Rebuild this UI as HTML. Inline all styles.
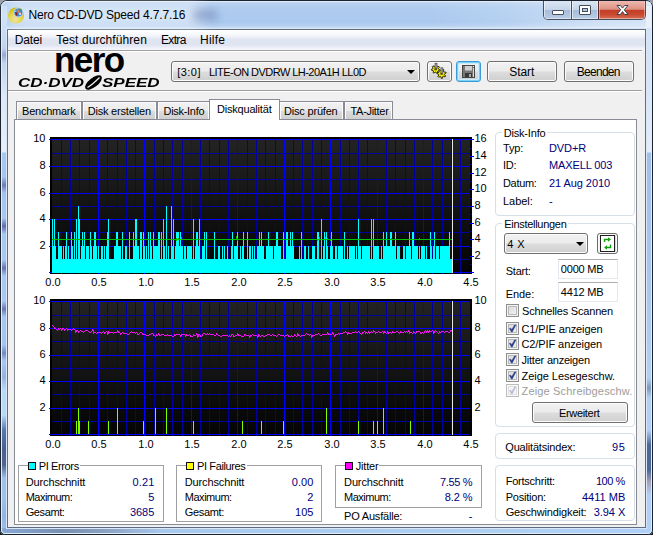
<!DOCTYPE html>
<html lang="de"><head><meta charset="utf-8"><title>Nero CD-DVD Speed 4.7.7.16</title>
<style>
html,body{margin:0;padding:0;}
body{width:653px;height:535px;overflow:hidden;position:relative;background:#9c9ca4;font-family:"Liberation Sans",sans-serif;font-size:11px;color:#000;}
.abs{position:absolute;}
div,span{position:absolute;white-space:nowrap;box-sizing:border-box;}
svg{position:absolute;overflow:visible;}
/* window frame */
#frame{left:0;top:0;width:653px;height:535px;border-radius:7px 7px 5px 5px;background:linear-gradient(#c4d8f2 0,#b0cdf0 7px,#aac9ee 22px,#b6d0f0 26px,#cfe0f5 28px,#a9c8ee 40px);}
#frame-out{left:0;top:0;width:653px;height:535px;border:1px solid #1b2330;border-radius:7px 7px 5px 5px;}
#frame-in{left:1px;top:1px;width:651px;height:533px;border:1px solid #e2edfa;border-radius:6px 6px 4px 4px;}
#client-border{left:7px;top:29px;width:639px;height:499px;border:1px solid #5f6d82;}
#client-glow{left:6px;top:28px;width:641px;height:501px;border:1px solid #d8e6f7;}
#client{left:8px;top:30px;width:637px;height:497px;background:#f0f0f0;}
#title{left:29px;top:7px;font-size:12px;line-height:16px;color:#000;letter-spacing:0.25px;}
#menubar{left:8px;top:30px;width:637px;height:20px;background:linear-gradient(#ffffff 0,#fafbfd 15%,#eef1f8 35%,#e0e5f1 45%,#dfe4f1 75%,#eef1f8 90%,#f4f6fb 100%);}
.menu{top:33px;font-size:12px;line-height:16px;}
.sep{left:8px;width:634px;height:2px;border-top:1px solid #a0a0a0;border-bottom:1px solid #fff;}
/* buttons */
.btn{border:1px solid #707070;border-radius:3px;background:linear-gradient(#f2f2f2 0,#ebebeb 48%,#dddddd 52%,#cfcfcf 100%);box-shadow:inset 0 0 0 1px #fcfcfc;text-align:center;font-size:12px;}
.combo{border:1px solid #707070;border-radius:3px;background:linear-gradient(#f2f2f2 0,#ebebeb 48%,#dddddd 52%,#cfcfcf 100%);box-shadow:inset 0 0 0 1px #fcfcfc;}
.arrow{width:0;height:0;border-left:4px solid transparent;border-right:4px solid transparent;border-top:4px solid #000;}
/* tabs */
.tab{top:101px;height:18px;border:1px solid #898c95;border-bottom:none;background:linear-gradient(#f2f2f2 0,#ebebeb 50%,#dddddd 53%,#cfcfcf 100%);box-shadow:inset 1px 1px 0 #fcfcfc,inset -1px 0 0 #fcfcfc;font-size:11px;line-height:13px;padding-top:3px;text-align:center;}
.tab.act{top:99px;height:21px;background:#fff;z-index:3;box-shadow:none;}
#page{left:14px;top:119px;width:623px;height:406px;border:1px solid #898c95;background:#fff;}
/* axis labels */
.ax{font-size:11px;line-height:14px;color:#000;}
.ax.r{text-align:right;}
.ax.c{text-align:center;}
/* group boxes */
.gb{border:1px solid #d5dfe5;border-radius:4px;}
.gbl{background:#fff;padding:0 2px;font-size:11px;line-height:13px;}
.gb2{border:1px solid #a0a0a0;}
.t{font-size:11px;line-height:13px;}
.v{font-size:11px;line-height:13px;color:#00007a;}
.rv{text-align:right;}
.edit{border:1px solid #e3e9ef;border-top-color:#abadb3;background:#fff;font-size:11px;line-height:13px;}
.cb{width:13px;height:13px;border:1px solid #8e8f8f;background:linear-gradient(135deg,#d6d6d6,#f6f6f6);box-shadow:inset 0 0 0 1px #f4f4f4, inset 0 0 0 2px #b9b9b9;}
.sq{width:8px;height:8px;border:1px solid #101010;}

.x{font-size:11px;line-height:16px;height:16px;z-index:5;}
.x.v{color:#00007a;}
.x.dis{color:#9c9c9c;}
.ck{width:9px;height:9px;}
.cb.dis{border-color:#bcbcbc;background:#f6f6f6;box-shadow:inset 0 0 0 1px #fafafa, inset 0 0 0 2px #e0e0e0;}

.lg{top:75px;font-size:12.5px;line-height:16px;font-weight:bold;font-style:italic;transform-origin:0 0;letter-spacing:0px;}
#glow{left:6px;top:3px;width:200px;height:24px;background:#fff;opacity:.55;filter:blur(7px);border-radius:12px;}
#blob{left:192px;top:9px;width:26px;height:12px;background:#5a6ea8;opacity:.45;filter:blur(4px);border-radius:6px;}

#fl{left:2px;top:6px;width:5px;height:527px;background:linear-gradient(#c8dcf4 24px,#c0d4f0 42px,#98a8d0 49px,#c0d4f0 57px,#dce8f8 90px,#e4ecf8 134px,#e8eef8 146px,#a8c8f0 147px,#a4c4ee 171px,#6c7cb4 179px,#a4c4ee 187px,#a8c8f0 212px,#5c6cac 220px,#a8c8f0 228px,#a8c8f0 254px,#6474b0 262px,#a8c8f0 270px,#a8c8f0 295px,#6878b4 303px,#a8c8f0 311px,#a4c4ee 339px,#7088c0 347px,#a8c8f0 355px,#98b0dc 371px,#b8d8f8 384px,#b8d8f8 409px,#5878b0 424px,#48608c 444px,#506890 459px,#a0c0e8 472px,#a0c0e8 494px,#94b4e0 509px,#9cbce6 521px,#a0c0e8 529px);}
#fr{left:646px;top:6px;width:5px;height:527px;background:linear-gradient(#d4e2f5 54px,#e4ecf8 146px,#a0c0e8 147px,#a8c8ee 294px,#b0d0f4 372px,#8098b8 382px,#b0d0f4 392px,#b0d0f8 424px,#4a6898 439px,#4a6898 464px,#a8a0b8 476px,#b0d0f8 489px,#b0d0f8 529px);}
#fb{left:2px;top:528px;width:649px;height:5px;background:linear-gradient(90deg,#88a8d4 0,#7890b0 60px,#8aa0c0 100px,#a8c8ec 160px,#b0d0f2 500px,#b0d0f8 100%);}
#tr{left:430px;top:2px;width:221px;height:26px;background:linear-gradient(100deg,rgba(255,255,255,0) 0,rgba(255,255,255,.12) 35%,rgba(255,255,255,.42) 75%,rgba(255,255,255,.5) 100%);}

</style></head>
<body>
<div style="left:0;top:527px;width:8px;height:8px;background:#14181e"></div><div style="left:645px;top:527px;width:8px;height:8px;background:#14181e"></div>
<div id="frame"></div>
<div id="fl"></div><div id="fr"></div><div id="fb"></div>
<div id="frame-out"></div>
<div id="frame-in"></div>
<div id="client-glow"></div>
<div id="client-border"></div>
<div id="client"></div>
<!-- title -->
<div id="tr"></div>
<div id="glow"></div>
<div id="blob"></div>
<svg id="appicon" style="left:7px;top:6px" width="18" height="18" viewBox="0 0 18 18"><defs><radialGradient id="ig" cx=".45" cy=".75" r=".7"><stop offset="0" stop-color="#eedfa8"/><stop offset=".5" stop-color="#e6d94e"/><stop offset="1" stop-color="#cdbc14"/></radialGradient></defs><circle cx="9" cy="9.500" r="8" fill="url(#ig)"/><circle cx="11.400" cy="6.600" r="5" fill="#d4d4dc"/><circle cx="11.400" cy="6.600" r="4" fill="#2a8ee0"/><path d="M9.500 3.500 L11 3 L14.500 8 L13 9z" fill="#f07848"/><path d="M11.500 2.800 h2.500 l1 1.500 h-2.500z" fill="#30a040"/><path d="M8 5.500 l1.500 .5 l1 3 l-1.500 .8 z" fill="#a01010"/><circle cx="8.600" cy="5.200" r=".8" fill="#f8e010"/><circle cx="13" cy="8" r=".9" fill="#fff"/></svg>
<!-- caption buttons -->
<div id="capbtns" style="left:543px;top:1px;width:103px;height:19px;border:1px solid #475063;border-top:none;border-radius:0 0 5px 5px;overflow:hidden;">
 <div style="left:0;top:0;width:28px;height:18px;background:linear-gradient(#dbe6f4 0,#c6d6ea 48%,#a7bddb 52%,#bacde6 100%);border-right:1px solid #475063;box-shadow:inset 1px 0 0 rgba(255,255,255,.55),inset -1px -1px 0 rgba(255,255,255,.45);"></div>
 <div style="left:28px;top:0;width:27px;height:18px;background:linear-gradient(#dbe6f4 0,#c6d6ea 48%,#a7bddb 52%,#bacde6 100%);border-right:1px solid #5a2a26;box-shadow:inset 1px 0 0 rgba(255,255,255,.55),inset -1px -1px 0 rgba(255,255,255,.45);"></div>
 <div style="left:55px;top:0;width:46px;height:18px;background:linear-gradient(#efb9ae 0,#dd9183 46%,#c23e28 52%,#c8492f 75%,#d67258 100%);box-shadow:inset 1px 0 0 rgba(255,220,210,.5),inset -1px -1px 0 rgba(255,220,210,.5);"></div>
</div>
<div style="left:552px;top:10px;width:12px;height:5px;background:#fff;border:1px solid #454c5c;border-radius:1px;"></div>
<div style="left:579px;top:5px;width:12px;height:10px;background:#fff;border:1px solid #454c5c;border-radius:1px;"></div>
<div style="left:582px;top:8px;width:6px;height:4px;background:#b4c8e2;border:1px solid #454c5c;"></div>
<svg style="left:616px;top:4px" width="13" height="12" viewBox="0 0 13 12"><path d="M1 1.500h3.400l2.100 2.600 2.100-2.600h3.400l-3.700 4.300 3.700 4.700h-3.400l-2.100-2.900-2.100 2.900h-3.400l3.700-4.700z" fill="#fff" stroke="#3c4150" stroke-width="1" stroke-linejoin="round"/></svg>
<!-- menu -->
<div id="menubar"></div>
<!-- logo -->
<div id="nero" style="left:54px;top:40px;font-size:35px;line-height:40px;font-weight:bold;letter-spacing:-1.6px;">nero</div>
<div id="cd1" class="lg" style="left:18px;transform:scaleX(1.36);">CD·DVD</div>
<div id="cd2" class="lg" style="left:102px;transform:scaleX(1.36);">SPEED</div>
<svg style="left:84px;top:75px" width="19" height="15" viewBox="0 0 19 15"><ellipse cx="9.500" cy="7.500" rx="10" ry="4.600" transform="rotate(-38 9.500 7.500)" fill="#000"/><path d="M3.500 12.500 C7 10.500 11 7 15.500 2.500" stroke="#f0f0f0" stroke-width="1.200" fill="none"/></svg>
<!-- toolbar -->
<div class="combo" style="left:171px;top:61px;width:249px;height:21px;"></div>
<div class="arrow" style="left:407px;top:70px;"></div>
<div class="btn" style="left:427px;top:61px;width:25px;height:21px;"></div>
<div class="btn" style="left:456px;top:61px;width:25px;height:21px;border-color:#3c9ad8;box-shadow:inset 0 0 0 1px #7ad0f4, inset 0 0 0 2px #c8ecfb;"></div>
<svg id="gears" style="left:430px;top:62px" width="19" height="18" viewBox="0 0 19 18"><polygon points="9.91,8.05 9.62,8.97 8.01,8.95 7.56,9.42 7.66,11.03 6.76,11.37 5.77,10.10 5.12,10.04 3.93,11.12 3.10,10.63 3.48,9.06 3.12,8.52 1.53,8.26 1.40,7.30 2.86,6.62 3.06,6.01 2.27,4.60 2.94,3.90 4.38,4.62 4.99,4.39 5.60,2.90 6.55,2.99 6.89,4.56 7.45,4.89 9.00,4.44 9.53,5.24 8.51,6.49 8.60,7.13" fill="#f4ec00" stroke="#1a1a00" stroke-width="0.9" stroke-linejoin="round"/><polygon points="15.64,14.01 15.04,14.85 13.35,14.24 12.76,14.57 12.39,16.33 11.36,16.39 10.78,14.69 10.16,14.43 8.55,15.24 7.86,14.48 8.83,12.96 8.64,12.32 7.01,11.56 7.17,10.55 8.97,10.36 9.35,9.81 8.92,8.06 9.82,7.56 11.08,8.84 11.75,8.80 12.85,7.37 13.81,7.76 13.59,9.55 14.04,10.05 15.84,10.02 16.13,11.01 14.60,11.95 14.49,12.62" fill="#f4ec00" stroke="#1a1a00" stroke-width="0.9" stroke-linejoin="round"/><circle cx="5.699999999999989" cy="7.200000000000003" r="1.300" fill="#605800"/><circle cx="11.600000000000023" cy="11.799999999999997" r="1.300" fill="#605800"/><rect x="5.0" y="1.2000000000000028" width="2" height="5.600" fill="#a8a8b0" stroke="#38383c" stroke-width=".6"/><rect x="10.899999999999977" y="5.799999999999997" width="2" height="5.600" fill="#a8a8b0" stroke="#38383c" stroke-width=".6"/></svg>
<svg id="floppy" style="left:462px;top:65px" width="14" height="13" viewBox="0 0 14 13" shape-rendering="crispEdges"><rect x="0" y="0" width="13" height="13" fill="#454545"/><rect x="1" y="1" width="11" height="11" fill="#787878"/><rect x="3" y="1" width="7" height="5" fill="#cfcfcf"/><rect x="3" y="5" width="7" height="1" fill="#a8a8a8"/><rect x="3" y="8" width="7" height="4" fill="#3a3a3a"/><rect x="7" y="9" width="2" height="3" fill="#a8a8a8"/><rect x="11" y="3" width="1" height="9" fill="#d8d8d8"/><rect x="11" y="1" width="1" height="1" fill="#e8e8e8"/></svg>
<div class="btn" style="left:487px;top:61px;width:70px;height:21px;"></div>
<div class="btn" style="left:564px;top:61px;width:70px;height:21px;"></div>
<div class="sep" style="top:50px"></div>
<div class="sep" style="top:90px"></div>
<!-- tabs -->
<div id="page"></div>
<div class="tab" style="left:16px;width:66px;"></div>
<div class="tab" style="left:82px;width:75px;"></div>
<div class="tab" style="left:157px;width:53px;"></div>
<div class="tab act" style="left:209px;width:71px;"></div>
<div class="tab" style="left:279px;width:65px;"></div>
<div class="tab" style="left:344px;width:49px;"></div>
<!-- charts -->
<svg class="abs" style="left:46px;top:136px" width="444" height="139" viewBox="46 136 444 139" shape-rendering="crispEdges">
<defs><linearGradient id="g1" x1="0" y1="0" x2="0" y2="1"><stop offset="0" stop-color="#232323"/><stop offset="1" stop-color="#040404"/></linearGradient></defs>
<rect x="50" y="137" width="422" height="137" fill="#000"/>
<rect x="52" y="139" width="418" height="134" fill="url(#g1)"/>
<rect x="61" y="139" width="1" height="135" fill="#00009c"/>
<rect x="70" y="139" width="1" height="135" fill="#00009c"/>
<rect x="79" y="139" width="1" height="135" fill="#00009c"/>
<rect x="89" y="139" width="1" height="135" fill="#00009c"/>
<rect x="98" y="139" width="1" height="135" fill="#0000ff"/>
<rect x="107" y="139" width="1" height="135" fill="#00009c"/>
<rect x="117" y="139" width="1" height="135" fill="#00009c"/>
<rect x="126" y="139" width="1" height="135" fill="#00009c"/>
<rect x="135" y="139" width="1" height="135" fill="#00009c"/>
<rect x="144" y="139" width="1" height="135" fill="#0000ff"/>
<rect x="154" y="139" width="1" height="135" fill="#00009c"/>
<rect x="163" y="139" width="1" height="135" fill="#00009c"/>
<rect x="172" y="139" width="1" height="135" fill="#00009c"/>
<rect x="182" y="139" width="1" height="135" fill="#00009c"/>
<rect x="191" y="139" width="1" height="135" fill="#0000ff"/>
<rect x="200" y="139" width="1" height="135" fill="#00009c"/>
<rect x="209" y="139" width="1" height="135" fill="#00009c"/>
<rect x="219" y="139" width="1" height="135" fill="#00009c"/>
<rect x="228" y="139" width="1" height="135" fill="#00009c"/>
<rect x="237" y="139" width="1" height="135" fill="#0000ff"/>
<rect x="247" y="139" width="1" height="135" fill="#00009c"/>
<rect x="256" y="139" width="1" height="135" fill="#00009c"/>
<rect x="265" y="139" width="1" height="135" fill="#00009c"/>
<rect x="275" y="139" width="1" height="135" fill="#00009c"/>
<rect x="284" y="139" width="1" height="135" fill="#0000ff"/>
<rect x="293" y="139" width="1" height="135" fill="#00009c"/>
<rect x="302" y="139" width="1" height="135" fill="#00009c"/>
<rect x="312" y="139" width="1" height="135" fill="#00009c"/>
<rect x="321" y="139" width="1" height="135" fill="#00009c"/>
<rect x="330" y="139" width="1" height="135" fill="#0000ff"/>
<rect x="340" y="139" width="1" height="135" fill="#00009c"/>
<rect x="349" y="139" width="1" height="135" fill="#00009c"/>
<rect x="358" y="139" width="1" height="135" fill="#00009c"/>
<rect x="367" y="139" width="1" height="135" fill="#00009c"/>
<rect x="377" y="139" width="1" height="135" fill="#0000ff"/>
<rect x="386" y="139" width="1" height="135" fill="#00009c"/>
<rect x="395" y="139" width="1" height="135" fill="#00009c"/>
<rect x="405" y="139" width="1" height="135" fill="#00009c"/>
<rect x="414" y="139" width="1" height="135" fill="#00009c"/>
<rect x="423" y="139" width="1" height="135" fill="#0000ff"/>
<rect x="432" y="139" width="1" height="135" fill="#00009c"/>
<rect x="442" y="139" width="1" height="135" fill="#00009c"/>
<rect x="451" y="139" width="1" height="135" fill="#00009c"/>
<rect x="460" y="139" width="1" height="135" fill="#00009c"/>
<rect x="49" y="272" width="421" height="1" fill="#0000ff"/>
<rect x="52" y="259" width="418" height="1" fill="#00009c"/>
<rect x="49" y="246" width="421" height="1" fill="#0000ff"/>
<rect x="52" y="232" width="418" height="1" fill="#00009c"/>
<rect x="49" y="219" width="421" height="1" fill="#0000ff"/>
<rect x="52" y="206" width="418" height="1" fill="#00009c"/>
<rect x="49" y="193" width="421" height="1" fill="#0000ff"/>
<rect x="52" y="179" width="418" height="1" fill="#00009c"/>
<rect x="49" y="166" width="421" height="1" fill="#0000ff"/>
<rect x="52" y="153" width="418" height="1" fill="#00009c"/>
<rect x="49" y="139" width="421" height="1" fill="#0000ff"/>
<rect x="470" y="272" width="4" height="1" fill="#0000ff"/>
<rect x="470" y="264" width="2" height="1" fill="#0000a8"/>
<rect x="470" y="256" width="4" height="1" fill="#0000ff"/>
<rect x="470" y="247" width="2" height="1" fill="#0000a8"/>
<rect x="470" y="239" width="4" height="1" fill="#0000ff"/>
<rect x="470" y="231" width="2" height="1" fill="#0000a8"/>
<rect x="470" y="223" width="4" height="1" fill="#0000ff"/>
<rect x="470" y="214" width="2" height="1" fill="#0000a8"/>
<rect x="470" y="206" width="4" height="1" fill="#0000ff"/>
<rect x="470" y="198" width="2" height="1" fill="#0000a8"/>
<rect x="470" y="189" width="4" height="1" fill="#0000ff"/>
<rect x="470" y="181" width="2" height="1" fill="#0000a8"/>
<rect x="470" y="173" width="4" height="1" fill="#0000ff"/>
<rect x="470" y="164" width="2" height="1" fill="#0000a8"/>
<rect x="470" y="156" width="4" height="1" fill="#0000ff"/>
<rect x="470" y="148" width="2" height="1" fill="#0000a8"/>
<rect x="470" y="139" width="4" height="1" fill="#0000ff"/>
<rect x="52" y="259" width="400" height="14" fill="#00ffff"/>
<rect x="52" y="246" width="4" height="13" fill="#00ffff"/>
<rect x="58" y="246" width="4" height="13" fill="#00ffff"/>
<rect x="63" y="246" width="1" height="13" fill="#00ffff"/>
<rect x="65" y="246" width="2" height="13" fill="#00ffff"/>
<rect x="68" y="246" width="1" height="13" fill="#00ffff"/>
<rect x="71" y="246" width="2" height="13" fill="#00ffff"/>
<rect x="74" y="246" width="1" height="13" fill="#00ffff"/>
<rect x="76" y="246" width="1" height="13" fill="#00ffff"/>
<rect x="78" y="246" width="2" height="13" fill="#00ffff"/>
<rect x="81" y="246" width="4" height="13" fill="#00ffff"/>
<rect x="86" y="246" width="3" height="13" fill="#00ffff"/>
<rect x="90" y="246" width="2" height="13" fill="#00ffff"/>
<rect x="93" y="246" width="4" height="13" fill="#00ffff"/>
<rect x="98" y="246" width="1" height="13" fill="#00ffff"/>
<rect x="101" y="246" width="2" height="13" fill="#00ffff"/>
<rect x="104" y="246" width="1" height="13" fill="#00ffff"/>
<rect x="106" y="246" width="3" height="13" fill="#00ffff"/>
<rect x="114" y="246" width="7" height="13" fill="#00ffff"/>
<rect x="122" y="246" width="1" height="13" fill="#00ffff"/>
<rect x="125" y="246" width="2" height="13" fill="#00ffff"/>
<rect x="129" y="246" width="1" height="13" fill="#00ffff"/>
<rect x="133" y="246" width="6" height="13" fill="#00ffff"/>
<rect x="140" y="246" width="2" height="13" fill="#00ffff"/>
<rect x="143" y="246" width="2" height="13" fill="#00ffff"/>
<rect x="146" y="246" width="1" height="13" fill="#00ffff"/>
<rect x="148" y="246" width="1" height="13" fill="#00ffff"/>
<rect x="150" y="246" width="2" height="13" fill="#00ffff"/>
<rect x="153" y="246" width="7" height="13" fill="#00ffff"/>
<rect x="161" y="246" width="1" height="13" fill="#00ffff"/>
<rect x="163" y="246" width="2" height="13" fill="#00ffff"/>
<rect x="166" y="246" width="1" height="13" fill="#00ffff"/>
<rect x="168" y="246" width="1" height="13" fill="#00ffff"/>
<rect x="171" y="246" width="3" height="13" fill="#00ffff"/>
<rect x="175" y="246" width="8" height="13" fill="#00ffff"/>
<rect x="184" y="246" width="2" height="13" fill="#00ffff"/>
<rect x="187" y="246" width="5" height="13" fill="#00ffff"/>
<rect x="193" y="246" width="1" height="13" fill="#00ffff"/>
<rect x="195" y="246" width="5" height="13" fill="#00ffff"/>
<rect x="202" y="246" width="3" height="13" fill="#00ffff"/>
<rect x="206" y="246" width="1" height="13" fill="#00ffff"/>
<rect x="214" y="246" width="1" height="13" fill="#00ffff"/>
<rect x="218" y="246" width="2" height="13" fill="#00ffff"/>
<rect x="222" y="246" width="1" height="13" fill="#00ffff"/>
<rect x="224" y="246" width="1" height="13" fill="#00ffff"/>
<rect x="227" y="246" width="1" height="13" fill="#00ffff"/>
<rect x="231" y="246" width="2" height="13" fill="#00ffff"/>
<rect x="234" y="246" width="4" height="13" fill="#00ffff"/>
<rect x="240" y="246" width="1" height="13" fill="#00ffff"/>
<rect x="242" y="246" width="2" height="13" fill="#00ffff"/>
<rect x="247" y="246" width="1" height="13" fill="#00ffff"/>
<rect x="249" y="246" width="2" height="13" fill="#00ffff"/>
<rect x="252" y="246" width="1" height="13" fill="#00ffff"/>
<rect x="254" y="246" width="1" height="13" fill="#00ffff"/>
<rect x="257" y="246" width="7" height="13" fill="#00ffff"/>
<rect x="266" y="246" width="7" height="13" fill="#00ffff"/>
<rect x="274" y="246" width="7" height="13" fill="#00ffff"/>
<rect x="283" y="246" width="1" height="13" fill="#00ffff"/>
<rect x="286" y="246" width="8" height="13" fill="#00ffff"/>
<rect x="299" y="246" width="1" height="13" fill="#00ffff"/>
<rect x="301" y="246" width="1" height="13" fill="#00ffff"/>
<rect x="304" y="246" width="2" height="13" fill="#00ffff"/>
<rect x="308" y="246" width="1" height="13" fill="#00ffff"/>
<rect x="312" y="246" width="3" height="13" fill="#00ffff"/>
<rect x="317" y="246" width="2" height="13" fill="#00ffff"/>
<rect x="321" y="246" width="1" height="13" fill="#00ffff"/>
<rect x="323" y="246" width="2" height="13" fill="#00ffff"/>
<rect x="326" y="246" width="2" height="13" fill="#00ffff"/>
<rect x="330" y="246" width="3" height="13" fill="#00ffff"/>
<rect x="335" y="246" width="2" height="13" fill="#00ffff"/>
<rect x="338" y="246" width="5" height="13" fill="#00ffff"/>
<rect x="344" y="246" width="1" height="13" fill="#00ffff"/>
<rect x="347" y="246" width="1" height="13" fill="#00ffff"/>
<rect x="349" y="246" width="6" height="13" fill="#00ffff"/>
<rect x="356" y="246" width="1" height="13" fill="#00ffff"/>
<rect x="358" y="246" width="3" height="13" fill="#00ffff"/>
<rect x="362" y="246" width="8" height="13" fill="#00ffff"/>
<rect x="371" y="246" width="1" height="13" fill="#00ffff"/>
<rect x="373" y="246" width="6" height="13" fill="#00ffff"/>
<rect x="381" y="246" width="1" height="13" fill="#00ffff"/>
<rect x="383" y="246" width="13" height="13" fill="#00ffff"/>
<rect x="397" y="246" width="3" height="13" fill="#00ffff"/>
<rect x="403" y="246" width="2" height="13" fill="#00ffff"/>
<rect x="406" y="246" width="5" height="13" fill="#00ffff"/>
<rect x="412" y="246" width="6" height="13" fill="#00ffff"/>
<rect x="419" y="246" width="1" height="13" fill="#00ffff"/>
<rect x="421" y="246" width="4" height="13" fill="#00ffff"/>
<rect x="426" y="246" width="1" height="13" fill="#00ffff"/>
<rect x="430" y="246" width="2" height="13" fill="#00ffff"/>
<rect x="433" y="246" width="2" height="13" fill="#00ffff"/>
<rect x="436" y="246" width="3" height="13" fill="#00ffff"/>
<rect x="440" y="246" width="10" height="13" fill="#00ffff"/>
<rect x="52" y="232" width="1" height="14" fill="#00ffff"/>
<rect x="54" y="232" width="1" height="14" fill="#00ffff"/>
<rect x="58" y="232" width="1" height="14" fill="#00ffff"/>
<rect x="66" y="232" width="1" height="14" fill="#00ffff"/>
<rect x="71" y="232" width="1" height="14" fill="#00ffff"/>
<rect x="74" y="232" width="1" height="14" fill="#00ffff"/>
<rect x="76" y="232" width="1" height="14" fill="#00ffff"/>
<rect x="78" y="232" width="2" height="14" fill="#00ffff"/>
<rect x="82" y="232" width="1" height="14" fill="#00ffff"/>
<rect x="84" y="232" width="1" height="14" fill="#00ffff"/>
<rect x="90" y="232" width="1" height="14" fill="#00ffff"/>
<rect x="94" y="232" width="2" height="14" fill="#00ffff"/>
<rect x="107" y="232" width="2" height="14" fill="#00ffff"/>
<rect x="116" y="232" width="2" height="14" fill="#00ffff"/>
<rect x="122" y="232" width="1" height="14" fill="#00ffff"/>
<rect x="129" y="232" width="1" height="14" fill="#00ffff"/>
<rect x="133" y="232" width="1" height="14" fill="#00ffff"/>
<rect x="135" y="232" width="2" height="14" fill="#00ffff"/>
<rect x="140" y="232" width="2" height="14" fill="#00ffff"/>
<rect x="143" y="232" width="1" height="14" fill="#00ffff"/>
<rect x="148" y="232" width="1" height="14" fill="#00ffff"/>
<rect x="150" y="232" width="1" height="14" fill="#00ffff"/>
<rect x="153" y="232" width="1" height="14" fill="#00ffff"/>
<rect x="158" y="232" width="2" height="14" fill="#00ffff"/>
<rect x="161" y="232" width="1" height="14" fill="#00ffff"/>
<rect x="163" y="232" width="1" height="14" fill="#00ffff"/>
<rect x="166" y="232" width="1" height="14" fill="#00ffff"/>
<rect x="171" y="232" width="1" height="14" fill="#00ffff"/>
<rect x="173" y="232" width="1" height="14" fill="#00ffff"/>
<rect x="176" y="232" width="3" height="14" fill="#00ffff"/>
<rect x="180" y="232" width="1" height="14" fill="#00ffff"/>
<rect x="193" y="232" width="1" height="14" fill="#00ffff"/>
<rect x="196" y="232" width="2" height="14" fill="#00ffff"/>
<rect x="199" y="232" width="1" height="14" fill="#00ffff"/>
<rect x="204" y="232" width="1" height="14" fill="#00ffff"/>
<rect x="206" y="232" width="1" height="14" fill="#00ffff"/>
<rect x="214" y="232" width="1" height="14" fill="#00ffff"/>
<rect x="232" y="232" width="1" height="14" fill="#00ffff"/>
<rect x="237" y="232" width="1" height="14" fill="#00ffff"/>
<rect x="243" y="232" width="1" height="14" fill="#00ffff"/>
<rect x="247" y="232" width="1" height="14" fill="#00ffff"/>
<rect x="259" y="232" width="1" height="14" fill="#00ffff"/>
<rect x="261" y="232" width="1" height="14" fill="#00ffff"/>
<rect x="268" y="232" width="1" height="14" fill="#00ffff"/>
<rect x="276" y="232" width="2" height="14" fill="#00ffff"/>
<rect x="283" y="232" width="1" height="14" fill="#00ffff"/>
<rect x="286" y="232" width="2" height="14" fill="#00ffff"/>
<rect x="290" y="232" width="1" height="14" fill="#00ffff"/>
<rect x="292" y="232" width="1" height="14" fill="#00ffff"/>
<rect x="301" y="232" width="1" height="14" fill="#00ffff"/>
<rect x="317" y="232" width="2" height="14" fill="#00ffff"/>
<rect x="321" y="232" width="1" height="14" fill="#00ffff"/>
<rect x="324" y="232" width="1" height="14" fill="#00ffff"/>
<rect x="326" y="232" width="1" height="14" fill="#00ffff"/>
<rect x="331" y="232" width="1" height="14" fill="#00ffff"/>
<rect x="344" y="232" width="1" height="14" fill="#00ffff"/>
<rect x="358" y="232" width="1" height="14" fill="#00ffff"/>
<rect x="371" y="232" width="1" height="14" fill="#00ffff"/>
<rect x="373" y="232" width="1" height="14" fill="#00ffff"/>
<rect x="383" y="232" width="1" height="14" fill="#00ffff"/>
<rect x="386" y="232" width="1" height="14" fill="#00ffff"/>
<rect x="390" y="232" width="2" height="14" fill="#00ffff"/>
<rect x="395" y="232" width="1" height="14" fill="#00ffff"/>
<rect x="409" y="232" width="1" height="14" fill="#00ffff"/>
<rect x="412" y="232" width="2" height="14" fill="#00ffff"/>
<rect x="430" y="232" width="1" height="14" fill="#00ffff"/>
<rect x="434" y="232" width="1" height="14" fill="#00ffff"/>
<rect x="449" y="232" width="1" height="14" fill="#00ffff"/>
<rect x="52" y="219" width="1" height="13" fill="#00ffff"/>
<rect x="54" y="219" width="1" height="13" fill="#00ffff"/>
<rect x="76" y="219" width="1" height="13" fill="#00ffff"/>
<rect x="78" y="219" width="2" height="13" fill="#00ffff"/>
<rect x="108" y="219" width="1" height="13" fill="#00ffff"/>
<rect x="135" y="219" width="2" height="13" fill="#00ffff"/>
<rect x="163" y="219" width="1" height="13" fill="#00ffff"/>
<rect x="166" y="219" width="1" height="13" fill="#00ffff"/>
<rect x="171" y="219" width="1" height="13" fill="#00ffff"/>
<rect x="173" y="219" width="1" height="13" fill="#00ffff"/>
<rect x="193" y="219" width="1" height="13" fill="#00ffff"/>
<rect x="199" y="219" width="1" height="13" fill="#00ffff"/>
<rect x="321" y="219" width="1" height="13" fill="#00ffff"/>
<rect x="358" y="219" width="1" height="13" fill="#00ffff"/>
<rect x="371" y="219" width="1" height="13" fill="#00ffff"/>
<rect x="373" y="219" width="1" height="13" fill="#00ffff"/>
<rect x="78" y="206" width="1" height="13" fill="#00ffff"/>
<rect x="166" y="206" width="1" height="13" fill="#00ffff"/>
<rect x="171" y="206" width="1" height="13" fill="#00ffff"/>
<rect x="52" y="239" width="400" height="1" fill="#00c000"/>
<rect x="176" y="238" width="1" height="3" fill="#00c000"/>
<rect x="178" y="238" width="1" height="2" fill="#00c000"/>
<rect x="181" y="237" width="1" height="3" fill="#00c000"/>
<rect x="236" y="236" width="1" height="4" fill="#00c000"/>
<rect x="237" y="238" width="1" height="3" fill="#00c000"/>
<rect x="317" y="239" width="1" height="2" fill="#00c000"/>
<rect x="319" y="237" width="1" height="3" fill="#00c000"/>
<rect x="325" y="237" width="1" height="3" fill="#00c000"/>
<rect x="327" y="238" width="1" height="2" fill="#00c000"/>
<rect x="330" y="239" width="1" height="2" fill="#00c000"/>
<rect x="391" y="238" width="1" height="2" fill="#00c000"/>
<rect x="419" y="238" width="1" height="2" fill="#00c000"/>
<rect x="452" y="139" width="1" height="134" fill="#e8e8e8"/>
</svg><div class="ax r" style="left:20px;width:25.500px;top:238px">2</div>
<div class="ax r" style="left:20px;width:25.500px;top:211px">4</div>
<div class="ax r" style="left:20px;width:25.500px;top:185px">6</div>
<div class="ax r" style="left:20px;width:25.500px;top:158px">8</div>
<div class="ax r" style="left:20px;width:25.500px;top:131px">10</div>
<div class="ax" style="left:474.500px;top:248px">2</div>
<div class="ax" style="left:474.500px;top:231px">4</div>
<div class="ax" style="left:474.500px;top:215px">6</div>
<div class="ax" style="left:474.500px;top:198px">8</div>
<div class="ax" style="left:474.500px;top:181px">10</div>
<div class="ax" style="left:474.500px;top:165px">12</div>
<div class="ax" style="left:474.500px;top:148px">14</div>
<div class="ax" style="left:474.500px;top:131px">16</div>
<div class="ax c" style="left:39px;width:28px;top:275px">0.0</div>
<div class="ax c" style="left:85px;width:28px;top:275px">0.5</div>
<div class="ax c" style="left:132px;width:28px;top:275px">1.0</div>
<div class="ax c" style="left:178px;width:28px;top:275px">1.5</div>
<div class="ax c" style="left:225px;width:28px;top:275px">2.0</div>
<div class="ax c" style="left:271px;width:28px;top:275px">2.5</div>
<div class="ax c" style="left:318px;width:28px;top:275px">3.0</div>
<div class="ax c" style="left:364px;width:28px;top:275px">3.5</div>
<div class="ax c" style="left:411px;width:28px;top:275px">4.0</div>
<div class="ax c" style="left:457px;width:28px;top:275px">4.5</div>
<svg class="abs" style="left:46px;top:298px" width="444" height="139" viewBox="46 298 444 139" shape-rendering="crispEdges">
<defs><linearGradient id="g2" x1="0" y1="0" x2="0" y2="1"><stop offset="0" stop-color="#232323"/><stop offset="1" stop-color="#040404"/></linearGradient></defs>
<rect x="50" y="299" width="422" height="137" fill="#000"/>
<rect x="52" y="301" width="418" height="134" fill="url(#g2)"/>
<rect x="61" y="301" width="1" height="135" fill="#00009c"/>
<rect x="70" y="301" width="1" height="135" fill="#00009c"/>
<rect x="79" y="301" width="1" height="135" fill="#00009c"/>
<rect x="89" y="301" width="1" height="135" fill="#00009c"/>
<rect x="98" y="301" width="1" height="135" fill="#0000ff"/>
<rect x="107" y="301" width="1" height="135" fill="#00009c"/>
<rect x="117" y="301" width="1" height="135" fill="#00009c"/>
<rect x="126" y="301" width="1" height="135" fill="#00009c"/>
<rect x="135" y="301" width="1" height="135" fill="#00009c"/>
<rect x="144" y="301" width="1" height="135" fill="#0000ff"/>
<rect x="154" y="301" width="1" height="135" fill="#00009c"/>
<rect x="163" y="301" width="1" height="135" fill="#00009c"/>
<rect x="172" y="301" width="1" height="135" fill="#00009c"/>
<rect x="182" y="301" width="1" height="135" fill="#00009c"/>
<rect x="191" y="301" width="1" height="135" fill="#0000ff"/>
<rect x="200" y="301" width="1" height="135" fill="#00009c"/>
<rect x="209" y="301" width="1" height="135" fill="#00009c"/>
<rect x="219" y="301" width="1" height="135" fill="#00009c"/>
<rect x="228" y="301" width="1" height="135" fill="#00009c"/>
<rect x="237" y="301" width="1" height="135" fill="#0000ff"/>
<rect x="247" y="301" width="1" height="135" fill="#00009c"/>
<rect x="256" y="301" width="1" height="135" fill="#00009c"/>
<rect x="265" y="301" width="1" height="135" fill="#00009c"/>
<rect x="275" y="301" width="1" height="135" fill="#00009c"/>
<rect x="284" y="301" width="1" height="135" fill="#0000ff"/>
<rect x="293" y="301" width="1" height="135" fill="#00009c"/>
<rect x="302" y="301" width="1" height="135" fill="#00009c"/>
<rect x="312" y="301" width="1" height="135" fill="#00009c"/>
<rect x="321" y="301" width="1" height="135" fill="#00009c"/>
<rect x="330" y="301" width="1" height="135" fill="#0000ff"/>
<rect x="340" y="301" width="1" height="135" fill="#00009c"/>
<rect x="349" y="301" width="1" height="135" fill="#00009c"/>
<rect x="358" y="301" width="1" height="135" fill="#00009c"/>
<rect x="367" y="301" width="1" height="135" fill="#00009c"/>
<rect x="377" y="301" width="1" height="135" fill="#0000ff"/>
<rect x="386" y="301" width="1" height="135" fill="#00009c"/>
<rect x="395" y="301" width="1" height="135" fill="#00009c"/>
<rect x="405" y="301" width="1" height="135" fill="#00009c"/>
<rect x="414" y="301" width="1" height="135" fill="#00009c"/>
<rect x="423" y="301" width="1" height="135" fill="#0000ff"/>
<rect x="432" y="301" width="1" height="135" fill="#00009c"/>
<rect x="442" y="301" width="1" height="135" fill="#00009c"/>
<rect x="451" y="301" width="1" height="135" fill="#00009c"/>
<rect x="460" y="301" width="1" height="135" fill="#00009c"/>
<rect x="49" y="434" width="421" height="1" fill="#0000ff"/>
<rect x="52" y="421" width="418" height="1" fill="#00009c"/>
<rect x="49" y="408" width="421" height="1" fill="#0000ff"/>
<rect x="52" y="394" width="418" height="1" fill="#00009c"/>
<rect x="49" y="381" width="421" height="1" fill="#0000ff"/>
<rect x="52" y="368" width="418" height="1" fill="#00009c"/>
<rect x="49" y="355" width="421" height="1" fill="#0000ff"/>
<rect x="52" y="341" width="418" height="1" fill="#00009c"/>
<rect x="49" y="328" width="421" height="1" fill="#0000ff"/>
<rect x="52" y="315" width="418" height="1" fill="#00009c"/>
<rect x="49" y="301" width="421" height="1" fill="#0000ff"/>
<rect x="470" y="301" width="2" height="135" fill="#000"/>
<rect x="76" y="421" width="1" height="13" fill="#80ff00"/>
<rect x="78" y="408" width="1" height="26" fill="#80ff00"/>
<rect x="79" y="421" width="1" height="13" fill="#80ff00"/>
<rect x="88" y="421" width="1" height="13" fill="#80ff00"/>
<rect x="108" y="421" width="1" height="13" fill="#80ff00"/>
<rect x="117" y="408" width="1" height="26" fill="#80ff00"/>
<rect x="143" y="421" width="1" height="13" fill="#80ff00"/>
<rect x="155" y="408" width="1" height="26" fill="#80ff00"/>
<rect x="166" y="408" width="1" height="26" fill="#80ff00"/>
<rect x="193" y="421" width="1" height="13" fill="#80ff00"/>
<rect x="242" y="421" width="1" height="13" fill="#80ff00"/>
<rect x="261" y="421" width="1" height="13" fill="#80ff00"/>
<rect x="283" y="421" width="1" height="13" fill="#80ff00"/>
<rect x="326" y="408" width="1" height="26" fill="#80ff00"/>
<rect x="358" y="421" width="1" height="13" fill="#80ff00"/>
<rect x="373" y="421" width="1" height="13" fill="#80ff00"/>
<rect x="377" y="421" width="1" height="13" fill="#80ff00"/>
<rect x="383" y="408" width="1" height="26" fill="#80ff00"/>
<rect x="410" y="421" width="1" height="13" fill="#80ff00"/>
<rect x="52" y="325" width="1" height="1" fill="#f010f0"/>
<rect x="53" y="326" width="1" height="1" fill="#f010f0"/>
<rect x="54" y="327" width="1" height="2" fill="#f010f0"/>
<rect x="55" y="328" width="1" height="1" fill="#f010f0"/>
<rect x="56" y="329" width="1" height="1" fill="#f010f0"/>
<rect x="57" y="330" width="1" height="1" fill="#f010f0"/>
<rect x="58" y="328" width="1" height="2" fill="#f010f0"/>
<rect x="59" y="329" width="1" height="1" fill="#f010f0"/>
<rect x="60" y="328" width="1" height="1" fill="#f010f0"/>
<rect x="61" y="329" width="1" height="2" fill="#f010f0"/>
<rect x="62" y="328" width="1" height="2" fill="#f010f0"/>
<rect x="63" y="328" width="1" height="1" fill="#f010f0"/>
<rect x="64" y="329" width="1" height="2" fill="#f010f0"/>
<rect x="65" y="329" width="1" height="1" fill="#f010f0"/>
<rect x="66" y="328" width="1" height="1" fill="#f010f0"/>
<rect x="67" y="329" width="1" height="2" fill="#f010f0"/>
<rect x="68" y="329" width="1" height="1" fill="#f010f0"/>
<rect x="69" y="329" width="1" height="1" fill="#f010f0"/>
<rect x="70" y="329" width="1" height="1" fill="#f010f0"/>
<rect x="71" y="330" width="1" height="1" fill="#f010f0"/>
<rect x="72" y="329" width="1" height="1" fill="#f010f0"/>
<rect x="73" y="328" width="1" height="1" fill="#f010f0"/>
<rect x="74" y="329" width="1" height="1" fill="#f010f0"/>
<rect x="75" y="330" width="1" height="3" fill="#f010f0"/>
<rect x="76" y="330" width="1" height="2" fill="#f010f0"/>
<rect x="77" y="330" width="1" height="1" fill="#f010f0"/>
<rect x="78" y="331" width="1" height="2" fill="#f010f0"/>
<rect x="79" y="331" width="1" height="1" fill="#f010f0"/>
<rect x="80" y="330" width="1" height="1" fill="#f010f0"/>
<rect x="81" y="331" width="1" height="1" fill="#f010f0"/>
<rect x="82" y="331" width="1" height="1" fill="#f010f0"/>
<rect x="83" y="332" width="1" height="1" fill="#f010f0"/>
<rect x="84" y="331" width="1" height="1" fill="#f010f0"/>
<rect x="85" y="330" width="1" height="1" fill="#f010f0"/>
<rect x="86" y="330" width="1" height="1" fill="#f010f0"/>
<rect x="87" y="330" width="1" height="1" fill="#f010f0"/>
<rect x="88" y="331" width="1" height="1" fill="#f010f0"/>
<rect x="89" y="332" width="1" height="1" fill="#f010f0"/>
<rect x="90" y="332" width="1" height="1" fill="#f010f0"/>
<rect x="91" y="331" width="1" height="1" fill="#f010f0"/>
<rect x="92" y="329" width="1" height="2" fill="#f010f0"/>
<rect x="93" y="330" width="1" height="4" fill="#f010f0"/>
<rect x="94" y="332" width="1" height="1" fill="#f010f0"/>
<rect x="95" y="332" width="1" height="1" fill="#f010f0"/>
<rect x="96" y="333" width="1" height="1" fill="#f010f0"/>
<rect x="97" y="332" width="1" height="1" fill="#f010f0"/>
<rect x="98" y="332" width="1" height="1" fill="#f010f0"/>
<rect x="99" y="332" width="1" height="1" fill="#f010f0"/>
<rect x="100" y="332" width="1" height="1" fill="#f010f0"/>
<rect x="101" y="333" width="1" height="1" fill="#f010f0"/>
<rect x="102" y="332" width="1" height="1" fill="#f010f0"/>
<rect x="103" y="331" width="1" height="1" fill="#f010f0"/>
<rect x="104" y="332" width="1" height="2" fill="#f010f0"/>
<rect x="105" y="332" width="1" height="1" fill="#f010f0"/>
<rect x="106" y="331" width="1" height="1" fill="#f010f0"/>
<rect x="107" y="332" width="1" height="3" fill="#f010f0"/>
<rect x="108" y="331" width="1" height="3" fill="#f010f0"/>
<rect x="109" y="332" width="1" height="1" fill="#f010f0"/>
<rect x="110" y="332" width="1" height="1" fill="#f010f0"/>
<rect x="111" y="332" width="1" height="1" fill="#f010f0"/>
<rect x="112" y="332" width="1" height="1" fill="#f010f0"/>
<rect x="113" y="333" width="1" height="1" fill="#f010f0"/>
<rect x="114" y="332" width="1" height="1" fill="#f010f0"/>
<rect x="115" y="332" width="1" height="1" fill="#f010f0"/>
<rect x="116" y="332" width="1" height="1" fill="#f010f0"/>
<rect x="117" y="330" width="1" height="2" fill="#f010f0"/>
<rect x="118" y="331" width="1" height="2" fill="#f010f0"/>
<rect x="119" y="332" width="1" height="1" fill="#f010f0"/>
<rect x="120" y="333" width="1" height="2" fill="#f010f0"/>
<rect x="121" y="333" width="1" height="1" fill="#f010f0"/>
<rect x="122" y="332" width="1" height="1" fill="#f010f0"/>
<rect x="123" y="333" width="1" height="1" fill="#f010f0"/>
<rect x="124" y="333" width="1" height="1" fill="#f010f0"/>
<rect x="125" y="333" width="1" height="1" fill="#f010f0"/>
<rect x="126" y="333" width="1" height="1" fill="#f010f0"/>
<rect x="127" y="334" width="1" height="1" fill="#f010f0"/>
<rect x="128" y="334" width="1" height="1" fill="#f010f0"/>
<rect x="129" y="333" width="1" height="1" fill="#f010f0"/>
<rect x="130" y="332" width="1" height="1" fill="#f010f0"/>
<rect x="131" y="331" width="1" height="1" fill="#f010f0"/>
<rect x="132" y="332" width="1" height="1" fill="#f010f0"/>
<rect x="133" y="332" width="1" height="1" fill="#f010f0"/>
<rect x="134" y="332" width="1" height="1" fill="#f010f0"/>
<rect x="135" y="333" width="1" height="1" fill="#f010f0"/>
<rect x="136" y="332" width="1" height="1" fill="#f010f0"/>
<rect x="137" y="333" width="1" height="2" fill="#f010f0"/>
<rect x="138" y="334" width="1" height="1" fill="#f010f0"/>
<rect x="139" y="333" width="1" height="1" fill="#f010f0"/>
<rect x="140" y="332" width="1" height="1" fill="#f010f0"/>
<rect x="141" y="332" width="1" height="1" fill="#f010f0"/>
<rect x="142" y="333" width="1" height="2" fill="#f010f0"/>
<rect x="143" y="334" width="1" height="1" fill="#f010f0"/>
<rect x="144" y="334" width="1" height="1" fill="#f010f0"/>
<rect x="145" y="334" width="1" height="1" fill="#f010f0"/>
<rect x="146" y="335" width="1" height="1" fill="#f010f0"/>
<rect x="147" y="335" width="1" height="1" fill="#f010f0"/>
<rect x="148" y="335" width="1" height="1" fill="#f010f0"/>
<rect x="149" y="334" width="1" height="1" fill="#f010f0"/>
<rect x="150" y="334" width="1" height="1" fill="#f010f0"/>
<rect x="151" y="333" width="1" height="1" fill="#f010f0"/>
<rect x="152" y="333" width="1" height="1" fill="#f010f0"/>
<rect x="153" y="334" width="1" height="2" fill="#f010f0"/>
<rect x="154" y="335" width="1" height="1" fill="#f010f0"/>
<rect x="155" y="336" width="1" height="1" fill="#f010f0"/>
<rect x="156" y="334" width="1" height="2" fill="#f010f0"/>
<rect x="157" y="335" width="1" height="1" fill="#f010f0"/>
<rect x="158" y="333" width="1" height="2" fill="#f010f0"/>
<rect x="159" y="334" width="1" height="2" fill="#f010f0"/>
<rect x="160" y="335" width="1" height="1" fill="#f010f0"/>
<rect x="161" y="334" width="1" height="1" fill="#f010f0"/>
<rect x="162" y="334" width="1" height="1" fill="#f010f0"/>
<rect x="163" y="334" width="1" height="1" fill="#f010f0"/>
<rect x="164" y="335" width="1" height="1" fill="#f010f0"/>
<rect x="165" y="335" width="1" height="1" fill="#f010f0"/>
<rect x="166" y="335" width="1" height="1" fill="#f010f0"/>
<rect x="167" y="334" width="1" height="1" fill="#f010f0"/>
<rect x="168" y="335" width="1" height="1" fill="#f010f0"/>
<rect x="169" y="335" width="1" height="1" fill="#f010f0"/>
<rect x="170" y="335" width="1" height="1" fill="#f010f0"/>
<rect x="171" y="335" width="1" height="1" fill="#f010f0"/>
<rect x="172" y="336" width="1" height="1" fill="#f010f0"/>
<rect x="173" y="336" width="1" height="1" fill="#f010f0"/>
<rect x="174" y="334" width="1" height="2" fill="#f010f0"/>
<rect x="175" y="335" width="1" height="1" fill="#f010f0"/>
<rect x="176" y="334" width="1" height="1" fill="#f010f0"/>
<rect x="177" y="334" width="1" height="1" fill="#f010f0"/>
<rect x="178" y="334" width="1" height="1" fill="#f010f0"/>
<rect x="179" y="334" width="1" height="1" fill="#f010f0"/>
<rect x="180" y="335" width="1" height="2" fill="#f010f0"/>
<rect x="181" y="334" width="1" height="2" fill="#f010f0"/>
<rect x="182" y="334" width="1" height="1" fill="#f010f0"/>
<rect x="183" y="334" width="1" height="1" fill="#f010f0"/>
<rect x="184" y="334" width="1" height="1" fill="#f010f0"/>
<rect x="185" y="335" width="1" height="2" fill="#f010f0"/>
<rect x="186" y="334" width="1" height="2" fill="#f010f0"/>
<rect x="187" y="335" width="1" height="1" fill="#f010f0"/>
<rect x="188" y="335" width="1" height="1" fill="#f010f0"/>
<rect x="189" y="334" width="1" height="1" fill="#f010f0"/>
<rect x="190" y="335" width="1" height="2" fill="#f010f0"/>
<rect x="191" y="336" width="1" height="1" fill="#f010f0"/>
<rect x="192" y="336" width="1" height="1" fill="#f010f0"/>
<rect x="193" y="334" width="1" height="2" fill="#f010f0"/>
<rect x="194" y="335" width="1" height="1" fill="#f010f0"/>
<rect x="195" y="335" width="1" height="1" fill="#f010f0"/>
<rect x="196" y="333" width="1" height="2" fill="#f010f0"/>
<rect x="197" y="334" width="1" height="4" fill="#f010f0"/>
<rect x="198" y="334" width="1" height="3" fill="#f010f0"/>
<rect x="199" y="334" width="1" height="1" fill="#f010f0"/>
<rect x="200" y="335" width="1" height="2" fill="#f010f0"/>
<rect x="201" y="336" width="1" height="1" fill="#f010f0"/>
<rect x="202" y="334" width="1" height="2" fill="#f010f0"/>
<rect x="203" y="333" width="1" height="1" fill="#f010f0"/>
<rect x="204" y="333" width="1" height="1" fill="#f010f0"/>
<rect x="205" y="334" width="1" height="1" fill="#f010f0"/>
<rect x="206" y="334" width="1" height="1" fill="#f010f0"/>
<rect x="207" y="333" width="1" height="1" fill="#f010f0"/>
<rect x="208" y="334" width="1" height="1" fill="#f010f0"/>
<rect x="209" y="333" width="1" height="1" fill="#f010f0"/>
<rect x="210" y="334" width="1" height="1" fill="#f010f0"/>
<rect x="211" y="334" width="1" height="1" fill="#f010f0"/>
<rect x="212" y="334" width="1" height="1" fill="#f010f0"/>
<rect x="213" y="334" width="1" height="1" fill="#f010f0"/>
<rect x="214" y="335" width="1" height="1" fill="#f010f0"/>
<rect x="215" y="335" width="1" height="1" fill="#f010f0"/>
<rect x="216" y="333" width="1" height="2" fill="#f010f0"/>
<rect x="217" y="334" width="1" height="1" fill="#f010f0"/>
<rect x="218" y="335" width="1" height="1" fill="#f010f0"/>
<rect x="219" y="335" width="1" height="1" fill="#f010f0"/>
<rect x="220" y="336" width="1" height="1" fill="#f010f0"/>
<rect x="221" y="336" width="1" height="1" fill="#f010f0"/>
<rect x="222" y="335" width="1" height="1" fill="#f010f0"/>
<rect x="223" y="335" width="1" height="1" fill="#f010f0"/>
<rect x="224" y="335" width="1" height="1" fill="#f010f0"/>
<rect x="225" y="335" width="1" height="1" fill="#f010f0"/>
<rect x="226" y="335" width="1" height="1" fill="#f010f0"/>
<rect x="227" y="335" width="1" height="1" fill="#f010f0"/>
<rect x="228" y="336" width="1" height="1" fill="#f010f0"/>
<rect x="229" y="335" width="1" height="1" fill="#f010f0"/>
<rect x="230" y="336" width="1" height="1" fill="#f010f0"/>
<rect x="231" y="334" width="1" height="2" fill="#f010f0"/>
<rect x="232" y="334" width="1" height="1" fill="#f010f0"/>
<rect x="233" y="335" width="1" height="2" fill="#f010f0"/>
<rect x="234" y="336" width="1" height="1" fill="#f010f0"/>
<rect x="235" y="335" width="1" height="1" fill="#f010f0"/>
<rect x="236" y="335" width="1" height="1" fill="#f010f0"/>
<rect x="237" y="333" width="1" height="2" fill="#f010f0"/>
<rect x="238" y="334" width="1" height="2" fill="#f010f0"/>
<rect x="239" y="335" width="1" height="1" fill="#f010f0"/>
<rect x="240" y="335" width="1" height="1" fill="#f010f0"/>
<rect x="241" y="336" width="1" height="1" fill="#f010f0"/>
<rect x="242" y="336" width="1" height="1" fill="#f010f0"/>
<rect x="243" y="336" width="1" height="1" fill="#f010f0"/>
<rect x="244" y="334" width="1" height="2" fill="#f010f0"/>
<rect x="245" y="334" width="1" height="1" fill="#f010f0"/>
<rect x="246" y="335" width="1" height="1" fill="#f010f0"/>
<rect x="247" y="335" width="1" height="1" fill="#f010f0"/>
<rect x="248" y="335" width="1" height="1" fill="#f010f0"/>
<rect x="249" y="336" width="1" height="2" fill="#f010f0"/>
<rect x="250" y="335" width="1" height="2" fill="#f010f0"/>
<rect x="251" y="335" width="1" height="1" fill="#f010f0"/>
<rect x="252" y="334" width="1" height="1" fill="#f010f0"/>
<rect x="253" y="335" width="1" height="1" fill="#f010f0"/>
<rect x="254" y="335" width="1" height="1" fill="#f010f0"/>
<rect x="255" y="335" width="1" height="1" fill="#f010f0"/>
<rect x="256" y="335" width="1" height="1" fill="#f010f0"/>
<rect x="257" y="336" width="1" height="2" fill="#f010f0"/>
<rect x="258" y="334" width="1" height="3" fill="#f010f0"/>
<rect x="259" y="335" width="1" height="1" fill="#f010f0"/>
<rect x="260" y="336" width="1" height="1" fill="#f010f0"/>
<rect x="261" y="335" width="1" height="1" fill="#f010f0"/>
<rect x="262" y="335" width="1" height="1" fill="#f010f0"/>
<rect x="263" y="336" width="1" height="1" fill="#f010f0"/>
<rect x="264" y="336" width="1" height="1" fill="#f010f0"/>
<rect x="265" y="335" width="1" height="1" fill="#f010f0"/>
<rect x="266" y="335" width="1" height="1" fill="#f010f0"/>
<rect x="267" y="334" width="1" height="1" fill="#f010f0"/>
<rect x="268" y="334" width="1" height="1" fill="#f010f0"/>
<rect x="269" y="334" width="1" height="1" fill="#f010f0"/>
<rect x="270" y="335" width="1" height="1" fill="#f010f0"/>
<rect x="271" y="335" width="1" height="1" fill="#f010f0"/>
<rect x="272" y="334" width="1" height="1" fill="#f010f0"/>
<rect x="273" y="335" width="1" height="1" fill="#f010f0"/>
<rect x="274" y="335" width="1" height="1" fill="#f010f0"/>
<rect x="275" y="335" width="1" height="1" fill="#f010f0"/>
<rect x="276" y="336" width="1" height="1" fill="#f010f0"/>
<rect x="277" y="335" width="1" height="1" fill="#f010f0"/>
<rect x="278" y="334" width="1" height="1" fill="#f010f0"/>
<rect x="279" y="334" width="1" height="1" fill="#f010f0"/>
<rect x="280" y="335" width="1" height="1" fill="#f010f0"/>
<rect x="281" y="335" width="1" height="1" fill="#f010f0"/>
<rect x="282" y="335" width="1" height="1" fill="#f010f0"/>
<rect x="283" y="335" width="1" height="1" fill="#f010f0"/>
<rect x="284" y="336" width="1" height="1" fill="#f010f0"/>
<rect x="285" y="335" width="1" height="1" fill="#f010f0"/>
<rect x="286" y="335" width="1" height="1" fill="#f010f0"/>
<rect x="287" y="334" width="1" height="1" fill="#f010f0"/>
<rect x="288" y="335" width="1" height="2" fill="#f010f0"/>
<rect x="289" y="336" width="1" height="1" fill="#f010f0"/>
<rect x="290" y="336" width="1" height="1" fill="#f010f0"/>
<rect x="291" y="335" width="1" height="1" fill="#f010f0"/>
<rect x="292" y="336" width="1" height="1" fill="#f010f0"/>
<rect x="293" y="336" width="1" height="1" fill="#f010f0"/>
<rect x="294" y="334" width="1" height="2" fill="#f010f0"/>
<rect x="295" y="335" width="1" height="1" fill="#f010f0"/>
<rect x="296" y="336" width="1" height="1" fill="#f010f0"/>
<rect x="297" y="333" width="1" height="3" fill="#f010f0"/>
<rect x="298" y="334" width="1" height="2" fill="#f010f0"/>
<rect x="299" y="335" width="1" height="1" fill="#f010f0"/>
<rect x="300" y="336" width="1" height="1" fill="#f010f0"/>
<rect x="301" y="335" width="1" height="1" fill="#f010f0"/>
<rect x="302" y="335" width="1" height="1" fill="#f010f0"/>
<rect x="303" y="335" width="1" height="1" fill="#f010f0"/>
<rect x="304" y="335" width="1" height="1" fill="#f010f0"/>
<rect x="305" y="334" width="1" height="1" fill="#f010f0"/>
<rect x="306" y="333" width="1" height="1" fill="#f010f0"/>
<rect x="307" y="334" width="1" height="1" fill="#f010f0"/>
<rect x="308" y="334" width="1" height="1" fill="#f010f0"/>
<rect x="309" y="335" width="1" height="1" fill="#f010f0"/>
<rect x="310" y="334" width="1" height="1" fill="#f010f0"/>
<rect x="311" y="335" width="1" height="3" fill="#f010f0"/>
<rect x="312" y="335" width="1" height="2" fill="#f010f0"/>
<rect x="313" y="335" width="1" height="1" fill="#f010f0"/>
<rect x="314" y="335" width="1" height="1" fill="#f010f0"/>
<rect x="315" y="334" width="1" height="1" fill="#f010f0"/>
<rect x="316" y="334" width="1" height="1" fill="#f010f0"/>
<rect x="317" y="334" width="1" height="1" fill="#f010f0"/>
<rect x="318" y="333" width="1" height="1" fill="#f010f0"/>
<rect x="319" y="334" width="1" height="1" fill="#f010f0"/>
<rect x="320" y="335" width="1" height="1" fill="#f010f0"/>
<rect x="321" y="335" width="1" height="1" fill="#f010f0"/>
<rect x="322" y="334" width="1" height="1" fill="#f010f0"/>
<rect x="323" y="334" width="1" height="1" fill="#f010f0"/>
<rect x="324" y="334" width="1" height="1" fill="#f010f0"/>
<rect x="325" y="334" width="1" height="1" fill="#f010f0"/>
<rect x="326" y="334" width="1" height="1" fill="#f010f0"/>
<rect x="327" y="332" width="1" height="2" fill="#f010f0"/>
<rect x="328" y="333" width="1" height="2" fill="#f010f0"/>
<rect x="329" y="334" width="1" height="1" fill="#f010f0"/>
<rect x="330" y="334" width="1" height="1" fill="#f010f0"/>
<rect x="331" y="334" width="1" height="1" fill="#f010f0"/>
<rect x="332" y="332" width="1" height="2" fill="#f010f0"/>
<rect x="333" y="333" width="1" height="2" fill="#f010f0"/>
<rect x="334" y="335" width="1" height="2" fill="#f010f0"/>
<rect x="335" y="334" width="1" height="2" fill="#f010f0"/>
<rect x="336" y="334" width="1" height="1" fill="#f010f0"/>
<rect x="337" y="334" width="1" height="1" fill="#f010f0"/>
<rect x="338" y="333" width="1" height="1" fill="#f010f0"/>
<rect x="339" y="334" width="1" height="1" fill="#f010f0"/>
<rect x="340" y="333" width="1" height="1" fill="#f010f0"/>
<rect x="341" y="333" width="1" height="1" fill="#f010f0"/>
<rect x="342" y="333" width="1" height="1" fill="#f010f0"/>
<rect x="343" y="332" width="1" height="1" fill="#f010f0"/>
<rect x="344" y="332" width="1" height="1" fill="#f010f0"/>
<rect x="345" y="331" width="1" height="1" fill="#f010f0"/>
<rect x="346" y="332" width="1" height="1" fill="#f010f0"/>
<rect x="347" y="333" width="1" height="2" fill="#f010f0"/>
<rect x="348" y="332" width="1" height="2" fill="#f010f0"/>
<rect x="349" y="333" width="1" height="1" fill="#f010f0"/>
<rect x="350" y="333" width="1" height="1" fill="#f010f0"/>
<rect x="351" y="333" width="1" height="1" fill="#f010f0"/>
<rect x="352" y="332" width="1" height="1" fill="#f010f0"/>
<rect x="353" y="332" width="1" height="1" fill="#f010f0"/>
<rect x="354" y="332" width="1" height="1" fill="#f010f0"/>
<rect x="355" y="331" width="1" height="1" fill="#f010f0"/>
<rect x="356" y="332" width="1" height="1" fill="#f010f0"/>
<rect x="357" y="332" width="1" height="1" fill="#f010f0"/>
<rect x="358" y="331" width="1" height="1" fill="#f010f0"/>
<rect x="359" y="332" width="1" height="1" fill="#f010f0"/>
<rect x="360" y="333" width="1" height="1" fill="#f010f0"/>
<rect x="361" y="334" width="1" height="1" fill="#f010f0"/>
<rect x="362" y="332" width="1" height="2" fill="#f010f0"/>
<rect x="363" y="332" width="1" height="1" fill="#f010f0"/>
<rect x="364" y="331" width="1" height="1" fill="#f010f0"/>
<rect x="365" y="332" width="1" height="2" fill="#f010f0"/>
<rect x="366" y="332" width="1" height="1" fill="#f010f0"/>
<rect x="367" y="333" width="1" height="1" fill="#f010f0"/>
<rect x="368" y="331" width="1" height="2" fill="#f010f0"/>
<rect x="369" y="332" width="1" height="2" fill="#f010f0"/>
<rect x="370" y="332" width="1" height="1" fill="#f010f0"/>
<rect x="371" y="331" width="1" height="1" fill="#f010f0"/>
<rect x="372" y="332" width="1" height="1" fill="#f010f0"/>
<rect x="373" y="330" width="1" height="2" fill="#f010f0"/>
<rect x="374" y="331" width="1" height="1" fill="#f010f0"/>
<rect x="375" y="332" width="1" height="2" fill="#f010f0"/>
<rect x="376" y="332" width="1" height="1" fill="#f010f0"/>
<rect x="377" y="332" width="1" height="1" fill="#f010f0"/>
<rect x="378" y="331" width="1" height="1" fill="#f010f0"/>
<rect x="379" y="332" width="1" height="1" fill="#f010f0"/>
<rect x="380" y="332" width="1" height="1" fill="#f010f0"/>
<rect x="381" y="332" width="1" height="1" fill="#f010f0"/>
<rect x="382" y="331" width="1" height="1" fill="#f010f0"/>
<rect x="383" y="332" width="1" height="2" fill="#f010f0"/>
<rect x="384" y="331" width="1" height="2" fill="#f010f0"/>
<rect x="385" y="332" width="1" height="1" fill="#f010f0"/>
<rect x="386" y="333" width="1" height="1" fill="#f010f0"/>
<rect x="387" y="331" width="1" height="2" fill="#f010f0"/>
<rect x="388" y="332" width="1" height="2" fill="#f010f0"/>
<rect x="389" y="332" width="1" height="1" fill="#f010f0"/>
<rect x="390" y="332" width="1" height="1" fill="#f010f0"/>
<rect x="391" y="333" width="1" height="1" fill="#f010f0"/>
<rect x="392" y="331" width="1" height="2" fill="#f010f0"/>
<rect x="393" y="332" width="1" height="1" fill="#f010f0"/>
<rect x="394" y="332" width="1" height="1" fill="#f010f0"/>
<rect x="395" y="332" width="1" height="1" fill="#f010f0"/>
<rect x="396" y="331" width="1" height="1" fill="#f010f0"/>
<rect x="397" y="331" width="1" height="1" fill="#f010f0"/>
<rect x="398" y="332" width="1" height="1" fill="#f010f0"/>
<rect x="399" y="333" width="1" height="1" fill="#f010f0"/>
<rect x="400" y="331" width="1" height="2" fill="#f010f0"/>
<rect x="401" y="332" width="1" height="1" fill="#f010f0"/>
<rect x="402" y="332" width="1" height="1" fill="#f010f0"/>
<rect x="403" y="332" width="1" height="1" fill="#f010f0"/>
<rect x="404" y="331" width="1" height="1" fill="#f010f0"/>
<rect x="405" y="332" width="1" height="1" fill="#f010f0"/>
<rect x="406" y="331" width="1" height="1" fill="#f010f0"/>
<rect x="407" y="332" width="1" height="1" fill="#f010f0"/>
<rect x="408" y="330" width="1" height="2" fill="#f010f0"/>
<rect x="409" y="331" width="1" height="3" fill="#f010f0"/>
<rect x="410" y="332" width="1" height="1" fill="#f010f0"/>
<rect x="411" y="332" width="1" height="1" fill="#f010f0"/>
<rect x="412" y="333" width="1" height="1" fill="#f010f0"/>
<rect x="413" y="331" width="1" height="2" fill="#f010f0"/>
<rect x="414" y="332" width="1" height="1" fill="#f010f0"/>
<rect x="415" y="333" width="1" height="1" fill="#f010f0"/>
<rect x="416" y="331" width="1" height="2" fill="#f010f0"/>
<rect x="417" y="331" width="1" height="1" fill="#f010f0"/>
<rect x="418" y="331" width="1" height="1" fill="#f010f0"/>
<rect x="419" y="331" width="1" height="1" fill="#f010f0"/>
<rect x="420" y="332" width="1" height="2" fill="#f010f0"/>
<rect x="421" y="333" width="1" height="1" fill="#f010f0"/>
<rect x="422" y="332" width="1" height="1" fill="#f010f0"/>
<rect x="423" y="333" width="1" height="1" fill="#f010f0"/>
<rect x="424" y="331" width="1" height="2" fill="#f010f0"/>
<rect x="425" y="330" width="1" height="1" fill="#f010f0"/>
<rect x="426" y="331" width="1" height="2" fill="#f010f0"/>
<rect x="427" y="330" width="1" height="2" fill="#f010f0"/>
<rect x="428" y="331" width="1" height="2" fill="#f010f0"/>
<rect x="429" y="330" width="1" height="2" fill="#f010f0"/>
<rect x="430" y="331" width="1" height="1" fill="#f010f0"/>
<rect x="431" y="331" width="1" height="1" fill="#f010f0"/>
<rect x="432" y="330" width="1" height="1" fill="#f010f0"/>
<rect x="433" y="331" width="1" height="3" fill="#f010f0"/>
<rect x="434" y="331" width="1" height="2" fill="#f010f0"/>
<rect x="435" y="330" width="1" height="1" fill="#f010f0"/>
<rect x="436" y="331" width="1" height="1" fill="#f010f0"/>
<rect x="437" y="332" width="1" height="1" fill="#f010f0"/>
<rect x="438" y="333" width="1" height="1" fill="#f010f0"/>
<rect x="439" y="331" width="1" height="2" fill="#f010f0"/>
<rect x="440" y="332" width="1" height="1" fill="#f010f0"/>
<rect x="441" y="331" width="1" height="1" fill="#f010f0"/>
<rect x="442" y="331" width="1" height="1" fill="#f010f0"/>
<rect x="443" y="331" width="1" height="1" fill="#f010f0"/>
<rect x="444" y="332" width="1" height="1" fill="#f010f0"/>
<rect x="445" y="331" width="1" height="1" fill="#f010f0"/>
<rect x="446" y="331" width="1" height="1" fill="#f010f0"/>
<rect x="447" y="331" width="1" height="1" fill="#f010f0"/>
<rect x="448" y="332" width="1" height="1" fill="#f010f0"/>
<rect x="449" y="332" width="1" height="1" fill="#f010f0"/>
<rect x="450" y="330" width="1" height="2" fill="#f010f0"/>
<rect x="451" y="330" width="1" height="1" fill="#f010f0"/>
<rect x="452" y="301" width="1" height="134" fill="#e8e8e8"/>
</svg><div class="ax r" style="left:20px;width:25.500px;top:400px">2</div>
<div class="ax r" style="left:20px;width:25.500px;top:373px">4</div>
<div class="ax r" style="left:20px;width:25.500px;top:347px">6</div>
<div class="ax r" style="left:20px;width:25.500px;top:320px">8</div>
<div class="ax r" style="left:20px;width:25.500px;top:293px">10</div>
<div class="ax" style="left:474.500px;top:400px">2</div>
<div class="ax" style="left:474.500px;top:373px">4</div>
<div class="ax" style="left:474.500px;top:347px">6</div>
<div class="ax" style="left:474.500px;top:320px">8</div>
<div class="ax" style="left:474.500px;top:293px">10</div>
<div class="ax c" style="left:39px;width:28px;top:437px">0.0</div>
<div class="ax c" style="left:85px;width:28px;top:437px">0.5</div>
<div class="ax c" style="left:132px;width:28px;top:437px">1.0</div>
<div class="ax c" style="left:178px;width:28px;top:437px">1.5</div>
<div class="ax c" style="left:225px;width:28px;top:437px">2.0</div>
<div class="ax c" style="left:271px;width:28px;top:437px">2.5</div>
<div class="ax c" style="left:318px;width:28px;top:437px">3.0</div>
<div class="ax c" style="left:364px;width:28px;top:437px">3.5</div>
<div class="ax c" style="left:411px;width:28px;top:437px">4.0</div>
<div class="ax c" style="left:457px;width:28px;top:437px">4.5</div>
<!-- right panel -->
<div class="gb" style="left:495px;top:132px;width:140px;height:84px;"></div>
<div class="gbl" style="left:502px;top:126px;width:45px;height:13px;"></div>

<div class="gb" style="left:495px;top:223px;width:140px;height:204px;"></div>
<div class="gbl" style="left:502px;top:217px;width:66px;height:13px;"></div>
<div class="combo" style="left:504px;top:233px;width:84px;height:21px;"></div>
<div class="arrow" style="left:576px;top:242px;"></div>
<div id="refresh" style="left:597px;top:233px;width:21px;height:21px;border:1px solid #6a6a6a;border-radius:3px;background:linear-gradient(90deg,#f4f4f4 0,#f0f0f0 75%,#cfcfcf 100%);box-shadow:inset 0 0 0 1px #fcfcfc;"></div>
<svg style="left:600px;top:235px" width="15" height="17" viewBox="0 0 15 17"><rect x="0.500" y="0.500" width="14" height="16" fill="#fff" stroke="#202020"/><path d="M4.500 7 V4.500 H8.500" fill="none" stroke="#10a010" stroke-width="1.400"/><path d="M8 2.200 L11 4.500 L8 6.800z" fill="#10a010"/><path d="M10.500 9.500 V12.500 H6.500" fill="none" stroke="#10a010" stroke-width="1.400"/><path d="M7 10.200 L4 12.500 L7 14.800z" fill="#10a010"/></svg>
<div class="edit" style="left:558px;top:259px;width:60px;height:20px;"></div>
<div class="edit" style="left:558px;top:282px;width:60px;height:20px;"></div>

<div class="cb" style="left:506px;top:304px;"></div>
<div class="cb" style="left:506px;top:322px;"></div><svg class="ck" width="9" height="9" viewBox="0 0 9 9" style="left:508px;top:324px"><path d="M1.500 4.500 L3.500 8 L4.200 8 L7.800 1 L6.600 1 L3.800 5.800 L2.800 4.200z" fill="#2a3c8c" stroke="#2a3c8c" stroke-width=".6"/></svg>
<div class="cb" style="left:506px;top:337px;"></div><svg class="ck" width="9" height="9" viewBox="0 0 9 9" style="left:508px;top:339px"><path d="M1.500 4.500 L3.500 8 L4.200 8 L7.800 1 L6.600 1 L3.800 5.800 L2.800 4.200z" fill="#2a3c8c" stroke="#2a3c8c" stroke-width=".6"/></svg>
<div class="cb" style="left:506px;top:353px;"></div><svg class="ck" width="9" height="9" viewBox="0 0 9 9" style="left:508px;top:355px"><path d="M1.500 4.500 L3.500 8 L4.200 8 L7.800 1 L6.600 1 L3.800 5.800 L2.800 4.200z" fill="#2a3c8c" stroke="#2a3c8c" stroke-width=".6"/></svg>
<div class="cb" style="left:506px;top:369px;"></div><svg class="ck" width="9" height="9" viewBox="0 0 9 9" style="left:508px;top:371px"><path d="M1.500 4.500 L3.500 8 L4.200 8 L7.800 1 L6.600 1 L3.800 5.800 L2.800 4.200z" fill="#2a3c8c" stroke="#2a3c8c" stroke-width=".6"/></svg>
<div class="cb dis" style="left:506px;top:384px;"></div><svg class="ck" width="9" height="9" viewBox="0 0 9 9" style="left:508px;top:386px;opacity:.3"><path d="M1.500 4.500 L3.500 8 L4.200 8 L7.800 1 L6.600 1 L3.800 5.800 L2.800 4.200z" fill="#2a3c8c" stroke="#2a3c8c" stroke-width=".6"/></svg>
<div class="btn" style="left:532px;top:402px;width:96px;height:21px;"></div>

<div class="gb" style="left:495px;top:433px;width:140px;height:26px;"></div>
<div class="gb" style="left:495px;top:465px;width:140px;height:56px;"></div>

<!-- bottom stats -->
<div class="gb2" style="left:18px;top:465px;width:146px;height:57px;"></div>
<div class="gbl" style="left:28px;top:459px;width:52px;height:13px;"></div>
<div class="sq" style="left:28px;top:462px;background:#00ffff;"></div>

<div class="gb2" style="left:176px;top:465px;width:146px;height:57px;"></div>
<div class="gbl" style="left:186px;top:459px;width:61px;height:13px;"></div>
<div class="sq" style="left:186px;top:462px;background:#ffff00;"></div>

<div class="gb2" style="left:335px;top:465px;width:147px;height:43px;"></div>
<div class="gbl" style="left:345px;top:459px;width:34px;height:13px;"></div>
<div class="sq" style="left:345px;top:462px;background:#ff00ff;"></div>
<div class="x ttl" style="left:28.5px;top:7px;letter-spacing:-0.156px;font-size:12px;">Nero CD-DVD Speed 4.7.7.16</div>
<div class="x mn" style="left:14.8px;top:32px;letter-spacing:-0.143px;font-size:12px;">Datei</div>
<div class="x mn" style="left:56.2px;top:32px;letter-spacing:0.082px;font-size:12px;">Test durchführen</div>
<div class="x mn" style="left:160.9px;top:32px;letter-spacing:-0.623px;font-size:12px;">Extra</div>
<div class="x mn" style="left:200.0px;top:32px;letter-spacing:0.237px;font-size:12px;">Hilfe</div>
<div class="x t" style="left:177.2px;top:64px;letter-spacing:0.479px;">[3:0]</div>
<div class="x t" style="left:209.0px;top:64px;letter-spacing:-0.544px;">LITE-ON DVDRW LH-20A1H LL0D</div>
<div class="x t" style="left:509.2px;top:64px;letter-spacing:-0.049px;font-size:12px;">Start</div>
<div class="x t" style="left:576.8px;top:64px;letter-spacing:-0.735px;font-size:12px;">Beenden</div>
<div class="x t" style="left:22.1px;top:103px;letter-spacing:-0.249px;">Benchmark</div>
<div class="x t" style="left:87.7px;top:103px;letter-spacing:-0.202px;">Disk erstellen</div>
<div class="x t" style="left:163.5px;top:103px;letter-spacing:-0.290px;">Disk-Info</div>
<div class="x t" style="left:217.0px;top:101px;letter-spacing:-0.197px;">Diskqualität</div>
<div class="x t" style="left:284.1px;top:103px;letter-spacing:-0.204px;">Disc prüfen</div>
<div class="x t" style="left:350.5px;top:103px;letter-spacing:-0.306px;">TA-Jitter</div>
<div class="x t" style="left:503.7px;top:125px;letter-spacing:-0.178px;">Disk-Info</div>
<div class="x t" style="left:503.0px;top:140px;letter-spacing:-0.174px;">Typ:</div>
<div class="x v" style="left:549.0px;top:140px;letter-spacing:-0.099px;">DVD+R</div>
<div class="x t" style="left:503.0px;top:157px;letter-spacing:-0.287px;">ID:</div>
<div class="x v" style="left:549.0px;top:157px;letter-spacing:-0.112px;">MAXELL 003</div>
<div class="x t" style="left:503.0px;top:175px;letter-spacing:-0.328px;">Datum:</div>
<div class="x v" style="left:549.0px;top:175px;letter-spacing:-0.063px;">21 Aug 2010</div>
<div class="x t" style="left:503.0px;top:193px;letter-spacing:-0.047px;">Label:</div>
<div class="x v" style="left:549.0px;top:193px;letter-spacing:-0.172px;">-</div>
<div class="x t" style="left:504.2px;top:216px;letter-spacing:-0.289px;">Einstellungen</div>
<div class="x t" style="left:507.3px;top:236px;letter-spacing:0.328px;">4 X</div>
<div class="x t" style="left:505.8px;top:263px;letter-spacing:-0.266px;">Start:</div>
<div class="x t" style="left:560.8px;top:261px;letter-spacing:-0.190px;">0000 MB</div>
<div class="x t" style="left:505.8px;top:286px;letter-spacing:-0.090px;">Ende:</div>
<div class="x t" style="left:560.8px;top:284px;letter-spacing:-0.190px;">4412 MB</div>
<div class="x t" style="left:522.0px;top:303px;letter-spacing:-0.188px;">Schnelles Scannen</div>
<div class="x t" style="left:521.5px;top:321px;letter-spacing:-0.104px;">C1/PIE anzeigen</div>
<div class="x t" style="left:521.5px;top:336px;letter-spacing:-0.096px;">C2/PIF anzeigen</div>
<div class="x t" style="left:521.5px;top:352px;letter-spacing:-0.216px;">Jitter anzeigen</div>
<div class="x t" style="left:521.5px;top:368px;letter-spacing:-0.040px;">Zeige Lesegeschw.</div>
<div class="x dis" style="left:521.5px;top:383px;letter-spacing:0.169px;">Zeige Schreibgeschw.</div>
<div class="x t" style="left:558.9px;top:405px;letter-spacing:-0.312px;">Erweitert</div>
<div class="x t" style="left:505.3px;top:439px;letter-spacing:-0.184px;">Qualitätsindex:</div>
<div class="x v" style="right:27.6px;top:439px;letter-spacing:0.625px;">95</div>
<div class="x t" style="left:505.7px;top:473px;letter-spacing:-0.229px;">Fortschritt:</div>
<div class="x v" style="right:28.1px;top:473px;letter-spacing:-0.441px;">100 %</div>
<div class="x t" style="left:505.7px;top:489px;letter-spacing:-0.223px;">Position:</div>
<div class="x v" style="right:27.7px;top:489px;letter-spacing:0.026px;">4411 MB</div>
<div class="x t" style="left:505.7px;top:504px;letter-spacing:-0.147px;">Geschwindigkeit:</div>
<div class="x v" style="right:27.8px;top:504px;letter-spacing:-0.052px;">3.94 X</div>
<div class="x t" style="left:38.7px;top:458px;letter-spacing:-0.367px;">PI Errors</div>
<div class="x t" style="left:25.7px;top:474px;letter-spacing:-0.128px;">Durchschnitt</div>
<div class="x v" style="right:498.6px;top:474px;letter-spacing:0.095px;">0.21</div>
<div class="x t" style="left:25.7px;top:489px;letter-spacing:-0.517px;">Maximum:</div>
<div class="x v" style="right:498.6px;top:489px;letter-spacing:0.075px;">5</div>
<div class="x t" style="left:25.7px;top:504px;letter-spacing:-0.397px;">Gesamt:</div>
<div class="x v" style="right:498.7px;top:504px;letter-spacing:-0.021px;">3685</div>
<div class="x t" style="left:197.0px;top:458px;letter-spacing:-0.371px;">PI Failures</div>
<div class="x t" style="left:184.8px;top:474px;letter-spacing:-0.137px;">Durchschnitt</div>
<div class="x v" style="right:339.6px;top:474px;letter-spacing:0.045px;">0.00</div>
<div class="x t" style="left:184.8px;top:489px;letter-spacing:-0.479px;">Maximum:</div>
<div class="x v" style="right:339.5px;top:489px;letter-spacing:0.075px;">2</div>
<div class="x t" style="left:184.8px;top:504px;letter-spacing:-0.354px;">Gesamt:</div>
<div class="x v" style="right:339.7px;top:504px;letter-spacing:-0.053px;">105</div>
<div class="x t" style="left:355.7px;top:458px;letter-spacing:-0.174px;">Jitter</div>
<div class="x t" style="left:344.1px;top:474px;letter-spacing:-0.145px;">Durchschnitt</div>
<div class="x v" style="right:180.9px;top:474px;letter-spacing:-0.358px;">7.55 %</div>
<div class="x t" style="left:344.1px;top:489px;letter-spacing:-0.504px;">Maximum:</div>
<div class="x v" style="right:180.6px;top:489px;letter-spacing:-0.088px;">8.2 %</div>
<div class="x t" style="left:344.1px;top:508px;letter-spacing:-0.204px;">PO Ausfälle:</div>
<div class="x v" style="right:180.7px;top:508px;letter-spacing:-0.172px;">-</div>

</body></html>
